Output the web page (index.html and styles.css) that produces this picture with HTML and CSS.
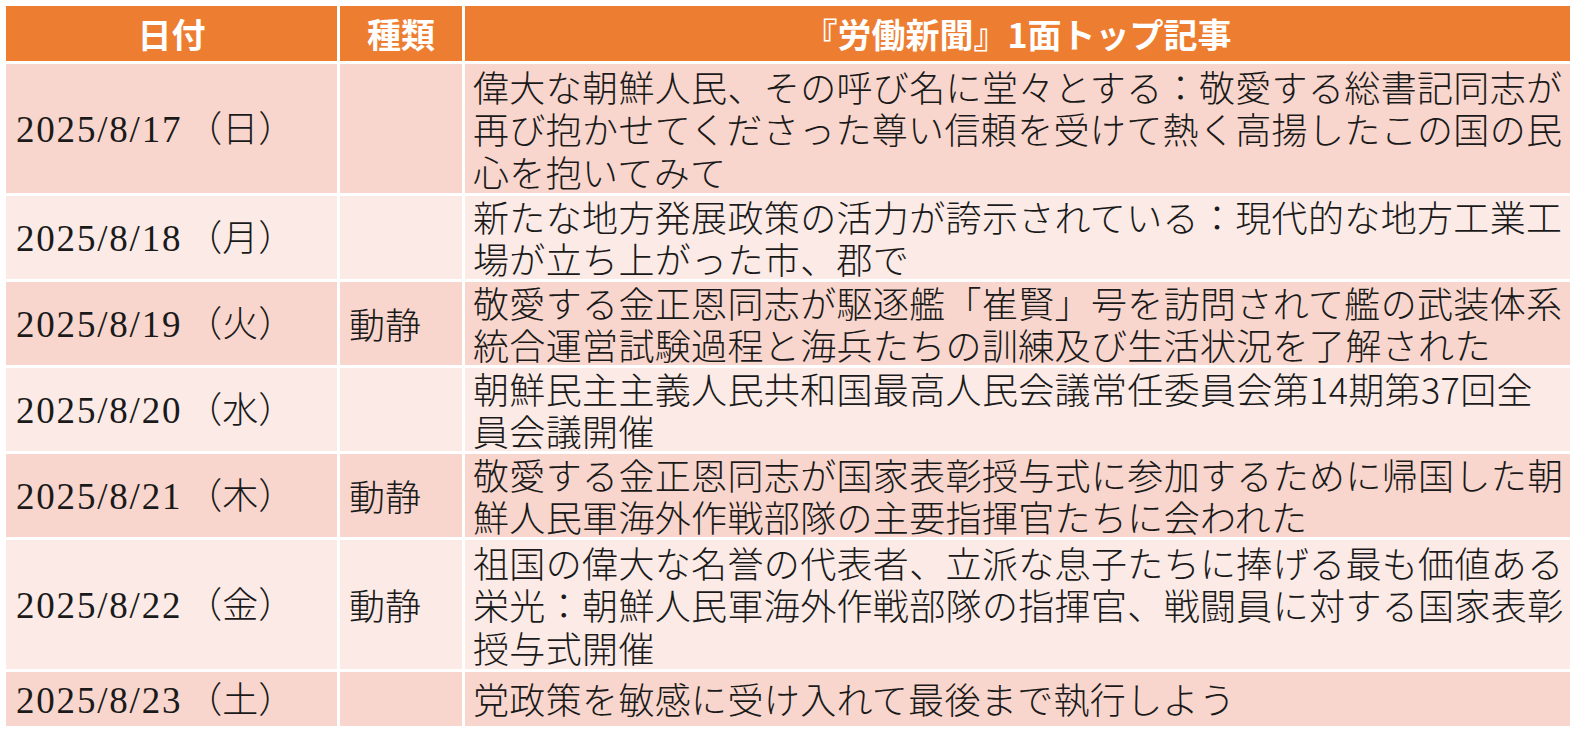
FILE: index.html
```html
<!DOCTYPE html>
<html lang="ja">
<head>
<meta charset="utf-8">
<link rel="stylesheet" href="styles.css">
</head>
<body>
<table class="news">
  <colgroup>
    <col class="c-date">
    <col class="c-kind">
    <col class="c-title">
  </colgroup>
  <thead>
    <tr class="head">
      <th>日付</th>
      <th>種類</th>
      <th>『労働新聞』1面トップ記事</th>
    </tr>
  </thead>
  <tbody>
    <tr class="odd r3">
      <td class="date"><span class="num">2025/8/17</span><span class="wd">（日）</span></td>
      <td class="kind"></td>
      <td class="title">偉大な朝鮮人民、その呼び名に堂々とする：敬愛する総書記同志が<br>再び抱かせてくださった尊い信頼を受けて熱く高揚したこの国の民<br>心を抱いてみて</td>
    </tr>
    <tr class="even r2">
      <td class="date"><span class="num">2025/8/18</span><span class="wd">（月）</span></td>
      <td class="kind"></td>
      <td class="title">新たな地方発展政策の活力が誇示されている：現代的な地方工業工<br>場が立ち上がった市、郡で</td>
    </tr>
    <tr class="odd r2">
      <td class="date"><span class="num">2025/8/19</span><span class="wd">（火）</span></td>
      <td class="kind">動静</td>
      <td class="title">敬愛する金正恩同志が駆逐艦「崔賢」号を訪問されて艦の武装体系<br>統合運営試験過程と海兵たちの訓練及び生活状況を了解された</td>
    </tr>
    <tr class="even r2">
      <td class="date"><span class="num">2025/8/20</span><span class="wd">（水）</span></td>
      <td class="kind"></td>
      <td class="title">朝鮮民主主義人民共和国最高人民会議常任委員会第14期第37回全<br>員会議開催</td>
    </tr>
    <tr class="odd r2">
      <td class="date"><span class="num">2025/8/21</span><span class="wd">（木）</span></td>
      <td class="kind">動静</td>
      <td class="title">敬愛する金正恩同志が国家表彰授与式に参加するために帰国した朝<br>鮮人民軍海外作戦部隊の主要指揮官たちに会われた</td>
    </tr>
    <tr class="even r3">
      <td class="date"><span class="num">2025/8/22</span><span class="wd">（金）</span></td>
      <td class="kind">動静</td>
      <td class="title">祖国の偉大な名誉の代表者、立派な息子たちに捧げる最も価値ある<br>栄光：朝鮮人民軍海外作戦部隊の指揮官、戦闘員に対する国家表彰<br>授与式開催</td>
    </tr>
    <tr class="odd r1">
      <td class="date"><span class="num">2025/8/23</span><span class="wd">（土）</span></td>
      <td class="kind"></td>
      <td class="title">党政策を敏感に受け入れて最後まで執行しよう</td>
    </tr>
  </tbody>
</table>
</body>
</html>
```
FILE: styles.css
```css
html, body {
  margin: 0;
  padding: 0;
  background: #ffffff;
}

body {
  padding: 3px 0 0 3px;
  font-family: "Noto Sans CJK JP", "Noto Sans", sans-serif;
  color: #1a1a1a;
}

.news {
  border-collapse: separate;
  border-spacing: 3px;
  table-layout: fixed;
  width: 1570px;
}

.c-date { width: 331px; }
.c-kind { width: 122px; }
.c-title { width: 1105px; }

.head th {
  background: #ed7d31;
  color: #ffffff;
  font-weight: 700;
  font-size: 34px;
  line-height: 42px;
  height: 55px;
  padding: 0;
  text-align: center;
  vertical-align: middle;
  white-space: nowrap;
}

td {
  padding: 0;
  vertical-align: middle;
  font-size: 36px;
  line-height: 41.5px;
  font-weight: 300;
  white-space: nowrap;
}

.odd td { background: #f8d6cd; }
.even td { background: #fbeae6; }

.r1 td { height: 54px; }
.r2 td { height: 83px; }
.r3 td { height: 129px; }

.r3 .title { line-height: 42.5px; }

.date {
  padding-left: 10px;
}

.date .num {
  font-family: "Liberation Serif", serif;
  font-size: 37px;
  letter-spacing: 1.8px;
  font-weight: 400;
}

.date .wd {
  font-family: "Noto Sans CJK JP", serif;
  font-size: 36px;
  font-weight: 300;
  padding-left: 4px;
}

.kind {
  padding-left: 9px;
}

.title {
  padding-left: 8px;
  letter-spacing: 0.35px;
}
```
